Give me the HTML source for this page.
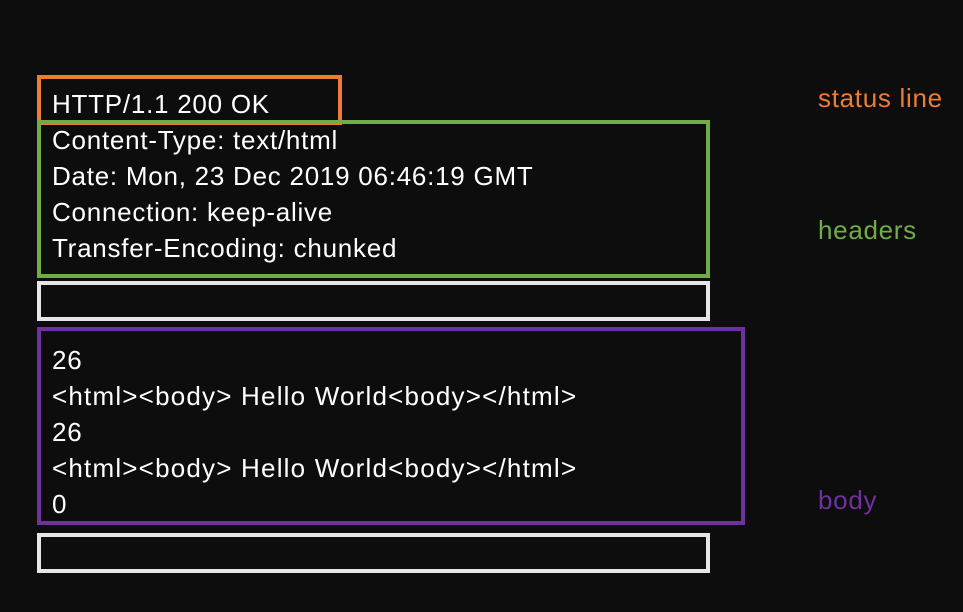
<!DOCTYPE html>
<html><head><style>
body{margin:0;width:963px;height:612px;background:#0d0d0d;position:relative;overflow:hidden;font-family:"Liberation Sans",sans-serif;color:#fff}
.b{position:absolute;box-sizing:border-box;border:4px solid}
.t{position:absolute;left:52px;font-size:26px;letter-spacing:0.75px;line-height:36px;white-space:pre}
.h{letter-spacing:1.2px}
.l{position:absolute;font-size:26px;letter-spacing:0.7px;line-height:30px}
</style></head><body>
<div class="b" style="left:37px;top:75px;width:305px;height:50px;border-color:#ed7d31"></div>
<div class="b" style="left:37px;top:120px;width:673px;height:158px;border-color:#70ad47"></div>
<div class="b" style="left:37px;top:281px;width:673px;height:40px;border-color:#e7e6e6"></div>
<div class="b" style="left:37px;top:327px;width:708px;height:198px;border-color:#7030a0"></div>
<div class="b" style="left:37px;top:533px;width:673px;height:40px;border-color:#e7e6e6"></div>
<div class="t" style="top:86px">HTTP/1.1 200 OK
Content-Type: text/html
Date: Mon, 23 Dec 2019 06:46:19 GMT
Connection: keep-alive
Transfer-Encoding: chunked</div>
<div class="t" style="top:342px">26
<span class="h">&lt;html&gt;&lt;body&gt; Hello World&lt;body&gt;&lt;/html&gt;</span>
26
<span class="h">&lt;html&gt;&lt;body&gt; Hello World&lt;body&gt;&lt;/html&gt;</span>
0</div>
<div class="l" style="left:818px;top:83px;color:#ed7d31">status line</div>
<div class="l" style="left:818px;top:215px;color:#70ad47">headers</div>
<div class="l" style="left:818px;top:485px;color:#7030a0">body</div>
</body></html>
